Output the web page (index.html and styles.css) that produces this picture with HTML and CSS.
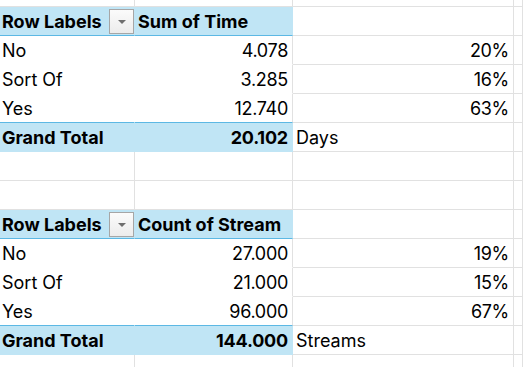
FILE: index.html
```html
<!DOCTYPE html>
<html>
<head>
<meta charset="utf-8">
<link rel="stylesheet" href="styles.css">
</head>
<body>
<div class="sheet">
  <div class="cell top"></div><div class="cell top"></div><div class="cell top"></div><div class="cell top"></div>

  <div class="cell pv-head first"><span class="b">Row Labels</span><span class="dd"><span class="tri"></span></span></div>
  <div class="cell pv-head second"><span class="b">Sum of Time</span></div>
  <div class="cell"></div><div class="cell"></div>

  <div class="cell pv first">No</div><div class="cell pv second num">4.078</div><div class="cell num">20%</div><div class="cell"></div>
  <div class="cell pv first">Sort Of</div><div class="cell pv second num">3.285</div><div class="cell num">16%</div><div class="cell"></div>
  <div class="cell pv first last">Yes</div><div class="cell pv second num last">12.740</div><div class="cell num">63%</div><div class="cell"></div>

  <div class="cell pv-total first b">Grand Total</div><div class="cell pv-total second num b">20.102</div><div class="cell">Days</div><div class="cell"></div>

  <div class="cell"></div><div class="cell"></div><div class="cell"></div><div class="cell"></div>
  <div class="cell"></div><div class="cell"></div><div class="cell"></div><div class="cell"></div>

  <div class="cell pv-head first"><span class="b">Row Labels</span><span class="dd"><span class="tri"></span></span></div>
  <div class="cell pv-head second"><span class="b">Count of Stream</span></div>
  <div class="cell"></div><div class="cell"></div>

  <div class="cell pv first">No</div><div class="cell pv second num">27.000</div><div class="cell num">19%</div><div class="cell"></div>
  <div class="cell pv first">Sort Of</div><div class="cell pv second num">21.000</div><div class="cell num">15%</div><div class="cell"></div>
  <div class="cell pv first last">Yes</div><div class="cell pv second num last">96.000</div><div class="cell num">67%</div><div class="cell"></div>

  <div class="cell pv-total first b">Grand Total</div><div class="cell pv-total second num b">144.000</div><div class="cell">Streams</div><div class="cell"></div>

  <div class="cell"></div><div class="cell"></div><div class="cell"></div><div class="cell"></div>
</div>
</body>
</html>
```
FILE: styles.css
```css
html, body {
  margin: 0;
  padding: 0;
  background: #ffffff;
}
.sheet {
  display: grid;
  grid-template-columns: 135px 158px 221px 1fr;
  grid-template-rows: 7px;
  grid-auto-rows: 29px;
  font-family: "Inter", "Noto Sans", sans-serif;
  font-size: 18px;
  color: #000;
  width: 523px;
  height: 367px;
  overflow: hidden;
}
.cell {
  box-sizing: border-box;
  border-right: 1px solid #e1e1e1;
  border-bottom: 1px solid #e1e1e1;
  padding: 0 4px 2px 3px;
  display: flex;
  align-items: flex-end;
  line-height: 22px;
  white-space: nowrap;
}
.cell.top {
  padding: 0;
}
.first { padding-left: 2px; }
.num { justify-content: flex-end; letter-spacing: -0.3px; }
.b { font-weight: 700; }
.num.b { letter-spacing: -0.2px; }

.pv {
  border-bottom-color: transparent;
}
.pv.first { border-right-color: transparent; }
.pv.last { border-bottom-color: #5cb8e4; }

.pv-head {
  background: #c0e5f5;
  border-bottom-color: #5cb8e4;
}
.pv-head.first {
  border-right-color: #c0e5f5;
  justify-content: space-between;
  padding-right: 0;
  padding-bottom: 1px;
}
.pv-head.first .b { margin-bottom: 1.5px; }
.pv-head.second { border-right-color: #c0e5f5; padding-bottom: 2.5px; }

.pv-total {
  background: #c0e5f5;
  border-bottom-color: #c0e5f5;
  border-right-color: #c0e5f5;
}

.dd {
  box-sizing: border-box;
  width: 25px;
  height: 25px;
  border: 1px solid #a6a6a6;
  background: linear-gradient(#fbfbfb, #ececec);
  display: flex;
  align-items: center;
  justify-content: center;
}
.tri {
  width: 0;
  height: 0;
  border-left: 4px solid transparent;
  border-right: 4px solid transparent;
  border-top: 4px solid #6e6e6e;
}
```
